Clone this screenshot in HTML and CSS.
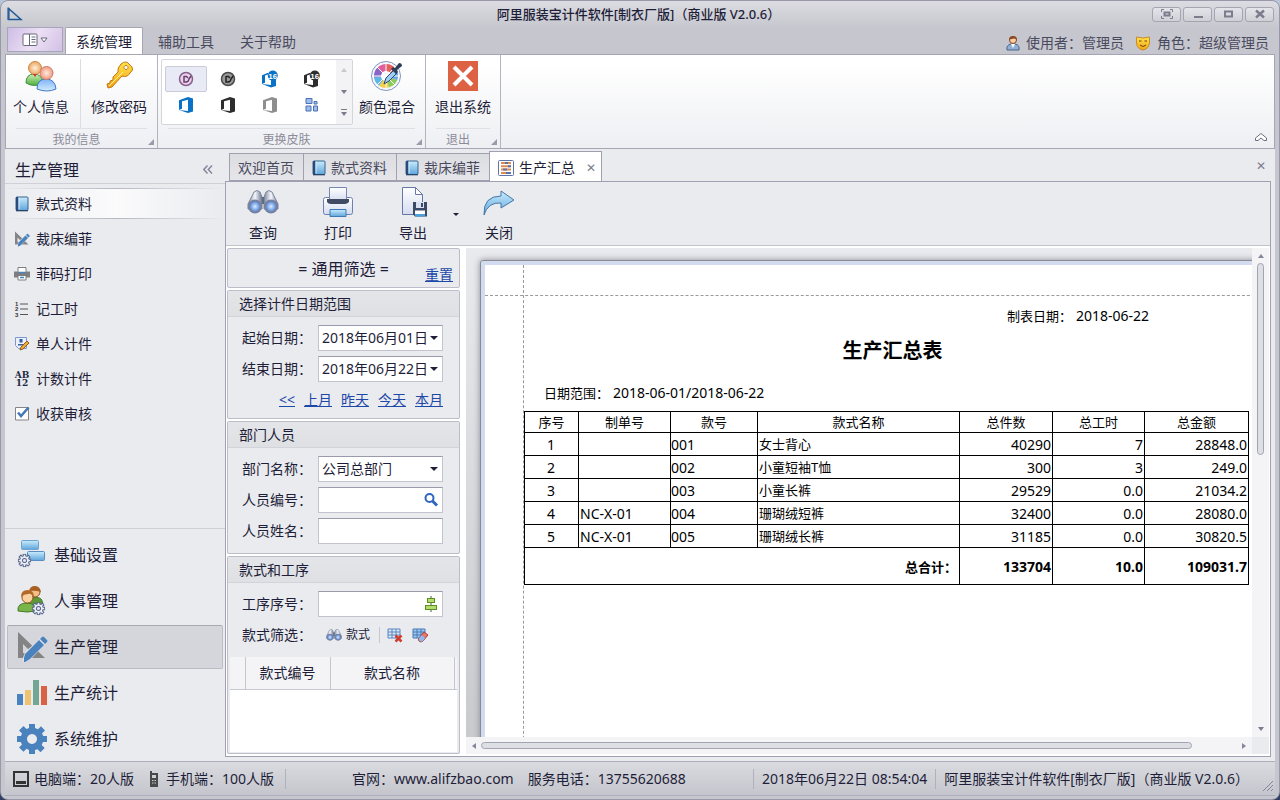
FILE: index.html
```html
<!DOCTYPE html>
<html lang="zh-CN">
<head>
  <meta charset="UTF-8" />
  <title>阿里服装宝计件软件</title>
  <meta name="viewport" content="width=device-width, initial-scale=1.0" />
  <link rel="stylesheet" href="styles.css">
</head>
<body>

  <!-- Shared icons -->
  <svg class="sprite" width="0" height="0" aria-hidden="true">
    <defs>
      <linearGradient id="gBlue" x1="0" y1="0" x2="0" y2="1"><stop offset="0" stop-color="#c9ecfc"/><stop offset="1" stop-color="#5fa5dc"/></linearGradient>
      <linearGradient id="gGreen" x1="0" y1="0" x2="0" y2="1"><stop offset="0" stop-color="#c8efb4"/><stop offset="1" stop-color="#4fae3c"/></linearGradient>
      <linearGradient id="gSky" x1="0" y1="0" x2="0" y2="1"><stop offset="0" stop-color="#7fb2f5"/><stop offset="1" stop-color="#d3ecff"/></linearGradient>
      <linearGradient id="gGold" x1="0" y1="0" x2="0" y2="1"><stop offset="0" stop-color="#ffe34a"/><stop offset="1" stop-color="#f3a313"/></linearGradient>
      <linearGradient id="gSteel" x1="0" y1="0" x2="1" y2="0"><stop offset="0" stop-color="#7d88a0"/><stop offset=".5" stop-color="#f5f7fb"/><stop offset="1" stop-color="#6b7690"/></linearGradient>
      <linearGradient id="gPaper" x1="0" y1="0" x2="0" y2="1"><stop offset="0" stop-color="#ffffff"/><stop offset="1" stop-color="#d5dcf0"/></linearGradient>
      <radialGradient id="gSkin"><stop offset="0" stop-color="#fff0dc"/><stop offset="1" stop-color="#eda65e"/></radialGradient>
      <radialGradient id="gPink"><stop offset="0" stop-color="#ffeadf"/><stop offset="1" stop-color="#ee9a80"/></radialGradient>
      <radialGradient id="gLens"><stop offset="0" stop-color="#d9ecff"/><stop offset="1" stop-color="#4377d0"/></radialGradient>
    </defs>
    <symbol id="book" viewBox="0 0 14 16">
      <rect x="1" y="1" width="12" height="13.5" rx="1" fill="url(#gBlue)" stroke="#35618f"/>
      <path d="M1 1h2.500v13.500H1z" fill="#2b4a7c"/><path d="M4 1.500v12" stroke="#d4efff"/><path d="M1 14.800h12" stroke="#23395c"/>
    </symbol>
    <symbol id="office" viewBox="0 0 16 18">
      <path d="M1 4.200 10 1l5 1.500v13L10 17 1 14l9 1V3.800L4 5.300v7.400L1 14z"/>
    </symbol>
    <symbol id="office16" viewBox="0 0 18 18">
      <path d="M1 5.200 7 2.800V4.600L4 5.400v7.400L1 14z"/><path d="m1 14 9 1v-5h5v6l-5 1.500z"/>
      <circle cx="11.800" cy="5.600" r="5"/>
    </symbol>
    <symbol id="ruler" viewBox="0 0 32 32">
      <path fill="#848484" fill-rule="evenodd" d="M2 1v26h27zM7 13l9 9H7z"/>
      <path fill="#e2e3e8" d="m7 27 2-6L26 6l5 5-16 17-8 3z"/>
      <path fill="#4a82bd" d="m8 27 1-4L23 9l5 5-14 14-5 3H8zM24 8l2-2q1-1 2 0l3 3q1 1 0 2l-2 2z"/>
    </symbol>
    <symbol id="gear" viewBox="0 0 32 32">
      <path fill-rule="evenodd" d="M13 1h6v4l3 1.300 3-3L29 7.500l-3 3 1.300 2.500H31v6h-4l-1.300 3 3 3-4.200 4.200-3-3L19 27v4h-6v-4l-2.500-1.300-3 3L3 24.500l3-3L4.700 19H1v-6h4l1-2.500-3-3L7.500 3l3 3L13 5zM16 11a5 5 0 1 0 .01 0z"/>
    </symbol>
    <symbol id="binoculars" viewBox="0 0 32 28">
      <path d="M13 9h6v7h-6z" fill="#4b5468"/>
      <path d="M7 4q3-3 6 0l2 5v12H1v-5z" fill="url(#gSteel)" stroke="#7a849a"/><path d="M25 4q-3-3-6 0l-2 5v12h14v-5z" fill="url(#gSteel)" stroke="#7a849a"/>
      <circle cx="8" cy="18.500" r="6" fill="url(#gLens)" stroke="#7682a0" stroke-width="2"/><circle cx="24" cy="18.500" r="6" fill="url(#gLens)" stroke="#7682a0" stroke-width="2"/>
    </symbol>
  </svg>

  <div class="app">

    <!-- Title bar -->
    <header class="titlebar">
      <svg class="logo" width="16" height="14" viewBox="0 0 16 14"><path d="M1.500 1.500v11h12.500z" fill="none" stroke="#1f5c96" stroke-width="1.500"/><path d="M1.500 1v12" stroke="#2b5f96" stroke-width="2"/></svg>
      <h1>阿里服装宝计件软件[制衣厂版]（商业版 V2.0.6）</h1>
      <div class="win-buttons">
        <button type="button" aria-label="全屏"><svg width="12" height="10" viewBox="0 0 12 10"><path d="M3 .5H.5V3M9 .5h2.500V3M3 9.500H.5V7M9 9.500h2.500V7" fill="none" stroke="#7b7c8c"/><rect x="3.500" y="3.500" width="5" height="3" fill="none" stroke="#7b7c8c" stroke-width="2"/></svg></button>
        <button type="button" aria-label="最小化"><svg width="12" height="10" viewBox="0 0 12 10"><path d="M2 8h9" stroke="#7b7c8c" stroke-width="2"/></svg></button>
        <button type="button" aria-label="最大化"><svg width="12" height="10" viewBox="0 0 12 10"><rect x="2" y="2.500" width="7" height="5" fill="none" stroke="#7b7c8c" stroke-width="2"/></svg></button>
        <button type="button" aria-label="关闭窗口"><svg width="12" height="10" viewBox="0 0 12 10"><path d="m2 1.500 8 7m0-7-8 7" stroke="#7b7c8c" stroke-width="2.500"/></svg></button>
      </div>
    </header>

    <!-- Ribbon tabs -->
    <nav class="ribbon-tabs">
      <button type="button" class="app-menu" aria-label="菜单">
        <svg width="26" height="14" viewBox="0 0 26 14"><rect x="1" y="1" width="14" height="11.500" rx="1" fill="#fff" stroke="#68687a"/><path d="M7.500 1v11.500M9.500 4h4m-4 2.500h4M9.500 9h4" stroke="#68687a"/><path d="M19 5h6l-3 4z" fill="#fff" stroke="#68687a"/></svg>
      </button>
      <a href="#" class="active">系统管理</a>
      <a href="#">辅助工具</a>
      <a href="#">关于帮助</a>
      <div class="user-info">
        <svg width="14" height="16" viewBox="0 0 14 16"><path d="M1 15q-1-5 4-6h4q5 1 4 6z" fill="#8fb0d4" stroke="#4c658a"/><path d="m5 9 2 4 2-4z" fill="#fff"/><circle cx="7" cy="5" r="3.500" fill="#f6cfa4" stroke="#85431f"/><path d="M3 5q0-4 4-4t4 4Q9 2.500 6 4 4 4 3 5z" fill="#8c4a26"/></svg>
        <span>使用者：管理员</span>
        <svg width="16" height="16" viewBox="0 0 16 16"><path d="M1.500 2q6 2 13 0v6q-1 6-6.500 7Q2 14 1.500 8z" fill="url(#gGold)" stroke="#c98a2c"/><path d="M4 6h2.500M9.500 6H12M5 10q3 3 6 0" fill="none" stroke="#6d4108"/></svg>
        <span>角色：超级管理员</span>
      </div>
    </nav>

    <!-- Ribbon -->
    <section class="ribbon">
      <div class="ribbon-group my-info">
        <div class="ribbon-body">
          <button type="button" class="big-btn">
            <svg width="32" height="32" viewBox="0 0 32 32"><path d="M1 23q0-9 8-9t9 9q-8 5-17 0z" fill="url(#gGreen)" stroke="#3f9140"/><circle cx="10" cy="8" r="6.500" fill="url(#gSkin)" stroke="#c88a4b"/><path d="m8 14 2 3 2-3z" fill="#c33"/><path d="M12 29q0-10 9-10t10 10q-9 4-19 0z" fill="url(#gSky)" stroke="#3e78c8"/><circle cx="21.500" cy="13" r="6.500" fill="url(#gPink)" stroke="#cf7b66"/></svg>
            <span>个人信息</span>
          </button>
          <button type="button" class="big-btn">
            <svg width="32" height="32" viewBox="0 0 32 32"><path d="M18 4q5-4 8 0l3 3q2 3-2 6-3 5-8 3L9 27l-4 1-1-4 3-1v-2l3-1v-3l5-5q-1-4 3-8zm5 1.500a2 2 0 1 0 .01 0z" fill="url(#gGold)" fill-rule="evenodd" stroke="#c27614"/><path d="M6 26 20 12" stroke="#fff3a0"/></svg>
            <span>修改密码</span>
          </button>
        </div>
        <div class="ribbon-caption">我的信息</div>
      </div>

      <div class="ribbon-group skins">
        <div class="ribbon-body">
          <div class="gallery">
            <div class="gallery-items">
              <button type="button" class="selected" aria-label="皮肤 1"><svg width="16" height="16" viewBox="0 0 16 16"><circle cx="8" cy="8" r="6.500" fill="#ecd0ea" stroke="#87618e" stroke-width="1.500"/><path d="M6 5v6h2q2.500 0 3-3l2-3M6 5.500h2.500L10 7" fill="none" stroke="#63406f" stroke-width="1.500"/></svg></button>
              <button type="button" aria-label="皮肤 2"><svg width="16" height="16" viewBox="0 0 16 16"><circle cx="8" cy="8" r="6.500" fill="#999" stroke="#4a4a4a" stroke-width="1.500"/><path d="M6 5v6h2q2.500 0 3-3l2-3M6 5.500h2.500L10 7" fill="none" stroke="#222" stroke-width="1.500"/></svg></button>
              <button type="button" class="c-blue" aria-label="皮肤 3"><svg width="18" height="18" viewBox="0 0 18 18"><use href="#office16"/><text class="badge" x="11.800" y="8.600">16</text></svg></button>
              <button type="button" class="c-dark" aria-label="皮肤 4"><svg width="18" height="18" viewBox="0 0 18 18"><use href="#office16"/><text class="badge" x="11.800" y="8.600">16</text></svg></button>
              <button type="button" class="c-blue" aria-label="皮肤 5"><svg width="16" height="18"><use href="#office"/></svg></button>
              <button type="button" class="c-dark" aria-label="皮肤 6"><svg width="16" height="18"><use href="#office"/></svg></button>
              <button type="button" class="c-grey" aria-label="皮肤 7"><svg width="16" height="18"><use href="#office"/></svg></button>
              <button type="button" aria-label="皮肤 8"><svg width="14" height="16" viewBox="0 0 14 16"><g fill="#9dbdea" stroke="#4c70b4"><path d="M1 1.500h6v5H1zM1 9h5v5H1zM8.500 9h4v5h-4zM9 4.500h3v2.500H9z"/></g></svg></button>
            </div>
            <div class="gallery-scroll"><i class="tri up"></i><i class="tri down"></i><i class="tri more"></i></div>
          </div>
          <button type="button" class="big-btn">
            <svg width="32" height="32" viewBox="0 0 32 32"><circle cx="15" cy="16" r="14.500" fill="#f4f8ff" stroke="#7f95bd"/><g fill="none" stroke-width="7"><path stroke="#e8605a" d="M15 7.500a8.500 8.500 0 0 1 7 3.500"/><path stroke="#6aa4e6" d="M22 11a8.500 8.500 0 0 1 1 8"/><path stroke="#8ccb58" d="M23 19a8.500 8.500 0 0 1-6 5"/><path stroke="#f5cf4c" d="M17 24a8.500 8.500 0 0 1-7-1"/><path stroke="#5cb7e4" d="M10 23a8.500 8.500 0 0 1-3.500-6"/><path stroke="#8a62c8" d="M6.500 17A8.500 8.500 0 0 1 9 10"/><path stroke="#e0609c" d="M9 10a8.500 8.500 0 0 1 6-2.500"/></g><path d="M15 2v28M1 16h28M5 6l20 20M25 6 5 26" stroke="#fff"/><path d="m13 24 2-6 8-8 3 3-8 8z" fill="#9fd0f4" stroke="#2d4870"/><path d="m20 9 2-2 2 1 4-5q3 0 3 3l-5 4 1 2-2 2z" fill="#2f3d58"/></svg>
            <span>颜色混合</span>
          </button>
        </div>
        <div class="ribbon-caption">更换皮肤</div>
      </div>

      <div class="ribbon-group exit">
        <div class="ribbon-body">
          <button type="button" class="big-btn">
            <svg width="32" height="32" viewBox="0 0 32 32"><path d="M1 1h30v30H1z" fill="#dc6243"/><path d="m7 7 18 18M25 7 7 25" stroke="#fff" stroke-width="4"/></svg>
            <span>退出系统</span>
          </button>
        </div>
        <div class="ribbon-caption">退出</div>
      </div>

      <button type="button" class="collapse" aria-label="收起"><svg width="14" height="10" viewBox="0 0 14 10"><path d="m1.500 6 5.500-4.500L12.500 6v2.500H10L7 6 4 8.500H1.500z" fill="#fff" stroke="#6d6e7d"/></svg></button>
    </section>

    <div class="workspace">

      <!-- Sidebar -->
      <aside class="sidebar">
        <div class="side-title">
          <h2>生产管理</h2>
          <button type="button" aria-label="折叠"><svg width="10" height="9" viewBox="0 0 10 9"><path d="M4.500.5.8 4.500l3.700 4M9 .5 5.300 4.500 9 8.500" fill="none" stroke="#85869a" stroke-width="1.500"/></svg></button>
        </div>
        <ul class="side-items">
          <li class="active"><a href="#"><svg width="16" height="16"><use href="#book"/></svg>款式资料</a></li>
          <li><a href="#"><svg width="16" height="16"><use href="#ruler"/></svg>裁床编菲</a></li>
          <li><a href="#"><svg width="16" height="16" viewBox="0 0 16 16"><path d="M0 5.500h16v6H0z" fill="#7e7e7e"/><path d="M4 1.500h8v5H4z" fill="#fff" stroke="#7e7e7e"/><path d="M4 9.500h8v4.500H4z" fill="#fff" stroke="#7e7e7e"/><path d="M4.500 6.500h7M6 11.500h4" stroke="#4a82bd" stroke-width="1.500"/></svg>菲码打印</a></li>
          <li><a href="#"><svg width="16" height="16" viewBox="0 0 16 16"><path d="M6 3h8M6 8h8M6 13.500h8" stroke="#555"/><g font-size="6" font-weight="700" font-family="Liberation Sans" fill="#333"><text x="1" y="5">1</text><text x="1" y="10">2</text><text x="1" y="15.500">3</text></g></svg>记工时</a></li>
          <li><a href="#"><svg width="16" height="16" viewBox="0 0 16 16"><path d="M1.500 1.500h11v11h-8l-3-3z" fill="#e8f1fd" stroke="#7d98cb"/><path d="M5.500 3h3v3.500h-3zM4 8h6v1.500H4z" fill="#3c5d9e"/><path d="m6 14 1-3 6-6 2 2-6 6z" fill="#f1a93b" stroke="#8d5b1e"/></svg>单人计件</a></li>
          <li><a href="#"><svg width="16" height="16" viewBox="0 0 16 16"><g font-size="9" font-weight="700" font-family="DejaVu Serif" fill="#1f2a44" text-anchor="middle"><text x="8" y="7">AB</text><text x="8" y="15">12</text></g></svg>计数计件</a></li>
          <li><a href="#"><svg width="16" height="16" viewBox="0 0 16 16"><path d="M1.500 1.500h13v12.500h-13z" fill="#fff" stroke="#858585"/><path d="m4 6.500 3 3.500 7.500-8.500" fill="none" stroke="#4379b4" stroke-width="2.500"/></svg>收获审核</a></li>
        </ul>
        <ul class="side-groups">
          <li><a href="#"><svg width="32" height="32" viewBox="0 0 32 32"><rect x="5.500" y="1.500" width="17" height="9" rx="1" fill="url(#gBlue)" stroke="#6fa3d0"/><rect x="11.500" y="12.500" width="17" height="9" rx="1" fill="url(#gBlue)" stroke="#5a8cc0"/><svg x="1" y="14" width="15" height="15" viewBox="-2 -2 36 36"><use href="#gear" width="32" height="32" fill="#e8edf7" stroke="#59658a" stroke-width="2.500"/></svg></svg>基础设置</a></li>
          <li><a href="#"><svg width="32" height="32" viewBox="0 0 32 32"><path d="M10 20q0-8 9-8 8 0 8 8z" fill="#5c9a35" stroke="#477b2a"/><circle cx="19" cy="7" r="5" fill="#f3c088" stroke="#8e4d1d"/><path d="M13 6q1-5 6-5t6 6q-6-2-12-1z" fill="#aa6022"/><path d="M2 26q-1-8 9-8 9 0 9 8-9 2-18 0z" fill="#79b54b" stroke="#477b2a"/><circle cx="11.500" cy="12.500" r="5.500" fill="#fad2a0" stroke="#8e4d1d"/><path d="M5 12q0-7 6.500-7t6.500 7q-2-4-6-3-4 0-7 3z" fill="#b56928"/><svg x="15" y="16" width="15" height="15" viewBox="-2 -2 36 36"><use href="#gear" width="32" height="32" fill="#e8edf7" stroke="#59658a" stroke-width="2.500"/></svg></svg>人事管理</a></li>
          <li class="active"><a href="#"><svg width="32" height="32"><use href="#ruler"/></svg>生产管理</a></li>
          <li><a href="#"><svg width="32" height="32" viewBox="0 0 32 32"><path d="M1 17h6v11H1z" fill="#4a82bd"/><path d="M9 13h6v15H9z" fill="#eec26f"/><path d="M17 3h6v25h-6z" fill="#73a794"/><path d="M25 9h6v19h-6z" fill="#da6243"/></svg>生产统计</a></li>
          <li><a href="#"><svg width="32" height="32" fill="#4a82bd"><use href="#gear"/></svg>系统维护</a></li>
        </ul>
      </aside>

      <!-- Document area -->
      <main class="docs">
        <div class="doc-tabs">
          <a href="#">欢迎首页</a>
          <a href="#"><svg width="14" height="16"><use href="#book"/></svg>款式资料</a>
          <a href="#"><svg width="14" height="16"><use href="#book"/></svg>裁床编菲</a>
          <a href="#" class="active"><svg width="16" height="16" viewBox="0 0 16 16"><rect x=".5" y=".5" width="15" height="15" rx="1" fill="#fff" stroke="#5f74a6"/><path d="M3 3h10M3 6.300h10M3 9.600h10M3 13h10" stroke="#e08a50" stroke-width="2"/><path d="M7 3h3M10 6.300h3M5 9.600h4M8 13h5" stroke="#5b76a6" stroke-width="2"/></svg>生产汇总<span class="tab-close">✕</span></a>
          <button type="button" class="close-all" aria-label="关闭标签">✕</button>
        </div>

        <div class="doc-body">
          <div class="toolbar">
            <button type="button"><svg width="32" height="32" viewBox="0 -2 32 32"><use href="#binoculars" width="32" height="28"/></svg>查询</button>
            <button type="button"><svg width="32" height="32" viewBox="0 0 32 32"><rect x="1.500" y="11.500" width="29" height="17" rx="2" fill="url(#gPaper)" stroke="#6e7fae"/><path d="M7.500 1.500h17V15h-17z" fill="url(#gPaper)" stroke="#7787b4"/><path d="M5 13h22v3q-2 2-4 2H9q-3 0-4-2z" fill="#414c64"/><path d="M8 23.500h16v7H8z" fill="url(#gBlue)" stroke="#3f78b2"/></svg>打印</button>
            <button type="button" class="export"><svg width="32" height="32" viewBox="0 0 32 32"><path d="M5.500 1.500h13l7 7v20h-20z" fill="url(#gPaper)" stroke="#6678a8"/><path d="M18.500 1.500v7h7z" fill="#fff" stroke="#6678a8"/><path d="M16 16h14v14.500H18l-2-2z" fill="#3d4a66"/><path d="M19 16h8v6h-8z" fill="#d9e2f2"/><path d="M24 17h2v4h-2z" fill="#3d4a66"/><path d="M18 24.500h10v5H18z" fill="#fff"/><path d="M18 28h10v2.500H18z" fill="#4aa0dc"/></svg>导出</button>
            <i class="tri drop"></i>
            <button type="button"><svg width="32" height="32" viewBox="0 0 32 32"><path d="M1 29Q0 10 18 10V5l13 9-13 8v-5Q5 16 1 29z" fill="url(#gBlue)" stroke="#4577a8"/></svg>关闭</button>
          </div>

          <div class="split">
            <form class="filters">
              <section class="panel filter-head">
                <h3>= 通用筛选 =</h3>
                <a href="#">重置</a>
              </section>

              <fieldset class="panel">
                <legend>选择计件日期范围</legend>
                <div class="fields">
                  <div class="field"><label for="startDate">起始日期：</label><span class="pick"><select id="startDate"><option>2018年06月01日</option></select></span></div>
                  <div class="field"><label for="endDate">结束日期：</label><span class="pick"><select id="endDate"><option>2018年06月22日</option></select></span></div>
                  <div class="quick"><a href="#">&lt;&lt;</a><a href="#">上月</a><a href="#">昨天</a><a href="#">今天</a><a href="#">本月</a></div>
                </div>
              </fieldset>

              <fieldset class="panel">
                <legend>部门人员</legend>
                <div class="fields">
                  <div class="field"><label for="dept">部门名称：</label><span class="pick"><select id="dept"><option>公司总部门</option></select></span></div>
                  <div class="field"><label for="empNo">人员编号：</label><span class="box"><input type="text" id="empNo"><svg width="16" height="16" viewBox="0 0 16 16"><circle cx="6.500" cy="6" r="4" fill="#fff" stroke="#2e66bf" stroke-width="2"/><path d="m9.500 9 4.500 4.500" stroke="#2e66bf" stroke-width="3"/></svg></span></div>
                  <div class="field"><label for="empName">人员姓名：</label><span class="box"><input type="text" id="empName"></span></div>
                </div>
              </fieldset>

              <fieldset class="panel grow">
                <legend>款式和工序</legend>
                <div class="fields">
                  <div class="field"><label for="procNo">工序序号：</label><span class="box"><input type="text" id="procNo"><svg width="16" height="16" viewBox="0 0 16 16"><path d="M8 0v16" stroke="#4d5a3a"/><rect x="4.500" y="2.500" width="7" height="4" fill="#b3dc6a" stroke="#5c8e21"/><rect x="2.500" y="9.500" width="11" height="4" fill="#b3dc6a" stroke="#5c8e21"/></svg></span></div>
                  <div class="field"><span class="label">款式筛选：</span>
                    <span class="mini-tools">
                      <button type="button"><svg width="16" height="14"><use href="#binoculars"/></svg>款式</button>
                      <button type="button" class="sep" aria-label="删除"><svg width="16" height="16" viewBox="0 0 16 16"><path d="M1 2h12v9H1z" fill="#dcebfb" stroke="#5b84bd"/><path d="M1 5h12M1 8h12M5 2v9M9 2v9" stroke="#5b84bd"/><path d="m8.500 8.500 6 6m0-6-6 6" stroke="#cf3d2c" stroke-width="2.500"/></svg></button>
                      <button type="button" aria-label="清空"><svg width="16" height="16" viewBox="0 0 16 16"><path d="M1 2h12v9H1z" fill="#9cc8f0" stroke="#4b78b5"/><path d="M1 5h12M1 8h12M5 2v9M9 2v9" stroke="#4b78b5"/><path d="m7 11 5-6 4 3-5 6q-2 2-4 0-1-1 0-3z" fill="#e8756a" stroke="#a83f38"/><path d="m7 11 3-3 3 3-2 3q-4 2-4-3z" fill="#8fb9ee"/></svg></button>
                    </span>
                  </div>
                </div>
                <div class="style-grid">
                  <table>
                    <colgroup><col class="g-mark"><col class="g-no"><col><col class="g-end"></colgroup>
                    <thead><tr><th></th><th>款式编号</th><th>款式名称</th><th></th></tr></thead>
                  </table>
                </div>
              </fieldset>
            </form>

            <!-- Report preview -->
            <div class="preview">
              <div class="canvas">
                <article class="paper">
                  <p class="made"><span>制表日期：</span>2018-06-22</p>
                  <h2>生产汇总表</h2>
                  <p class="range"><span>日期范围：</span>2018-06-01/2018-06-22</p>
                  <table class="report">
                    <colgroup><col class="c-seq"><col class="c-order"><col class="c-style"><col class="c-name"><col class="c-count"><col class="c-hours"><col class="c-money"></colgroup>
                    <thead>
                      <tr><th>序号</th><th>制单号</th><th>款号</th><th>款式名称</th><th>总件数</th><th>总工时</th><th>总金额</th></tr>
                    </thead>
                    <tbody>
                      <tr><td>1</td><td></td><td>001</td><td>女士背心</td><td>40290</td><td>7</td><td>28848.0</td></tr>
                      <tr><td>2</td><td></td><td>002</td><td>小童短袖T恤</td><td>300</td><td>3</td><td>249.0</td></tr>
                      <tr><td>3</td><td></td><td>003</td><td>小童长裤</td><td>29529</td><td>0.0</td><td>21034.2</td></tr>
                      <tr><td>4</td><td>NC-X-01</td><td>004</td><td>珊瑚绒短裤</td><td>32400</td><td>0.0</td><td>28080.0</td></tr>
                      <tr><td>5</td><td>NC-X-01</td><td>005</td><td>珊瑚绒长裤</td><td>31185</td><td>0.0</td><td>30820.5</td></tr>
                    </tbody>
                    <tfoot>
                      <tr><th colspan="4">总合计：</th><td>133704</td><td>10.0</td><td>109031.7</td></tr>
                    </tfoot>
                  </table>
                </article>
              </div>
              <div class="vbar"><i class="tri up"></i><span class="track"><span class="thumb"></span></span><i class="tri down"></i></div>
              <div class="hbar"><i class="tri left"></i><span class="track"><span class="thumb"></span></span><i class="tri right"></i></div>
              <div class="corner"></div>
            </div>
          </div>
        </div>
      </main>
    </div>

    <!-- Status bar -->
    <footer class="statusbar">
      <svg width="16" height="16" viewBox="0 0 16 16"><path d="M1 1h14v14H1z" fill="none" stroke="#333" stroke-width="2"/><path d="M3 10h10v3H3z" fill="#333"/></svg>
      <span>电脑端：20人版</span>
      <svg class="phone" width="10" height="16" viewBox="0 0 10 16"><path d="M1 0h2v2h6v14H1z" fill="#4a4a4a"/><path d="M3 4h4v3H3z" fill="#d0d0d4"/><path d="M3 9.500h4M3 12h4" stroke="#d0d0d4" stroke-dasharray="1 .5"/></svg>
      <span>手机端：100人版</span>
      <div class="status-mid"><span>官网：www.alifzbao.com</span><span>服务电话：13755620688</span></div>
      <span class="divided">2018年06月22日 08:54:04</span>
      <span class="divided version">阿里服装宝计件软件[制衣厂版]（商业版 V2.0.6）</span>
      <svg class="grip" width="12" height="12" viewBox="0 0 12 12"><path d="M1 11 11 1M5 11l6-6M9 11l2-2" stroke="#85869a"/></svg>
    </footer>
  </div>

</body>
</html>
```
FILE: styles.css
```css
* {
  box-sizing: border-box;
}

body {
  margin: 0;
  background: linear-gradient(#b9c6d8, #2f3f60);
  color: #1e1e38;
  font-family: "Noto Sans", "Noto Sans CJK SC", sans-serif;
  font-size: 14px;
  line-height: 20px;
}

h1, h2, h3, p, ul, fieldset {
  margin: 0;
  padding: 0;
  font-weight: normal;
}

ul {
  list-style: none;
}

fieldset {
  border: 0;
  min-width: 0;
}

a {
  color: inherit;
  text-decoration: none;
}

button, input, select {
  margin: 0;
  padding: 0;
  border: 0;
  background: none;
  color: inherit;
  font: inherit;
}

svg {
  display: block;
  flex: none;
}

.sprite {
  position: absolute;
}

.app {
  display: flex;
  flex-direction: column;
  height: 100vh;
  padding: 0 4px 3px;
  border: 1px solid #9898aa;
  border-radius: 8px;
  background: linear-gradient(#dcdce2, #c6c6ce 27px);
  overflow: hidden;
}

/* Title bar */
.titlebar {
  display: flex;
  align-items: center;
  height: 26px;
  padding: 0 1px 0 2px;
}

.titlebar h1 {
  flex: 1;
  padding-left: 102px;
  text-align: center;
  font-size: 13px;
  font-weight: 500;
}

.win-buttons {
  display: flex;
  gap: 2px;
}

.win-buttons button {
  display: flex;
  align-items: center;
  justify-content: center;
  width: 29px;
  height: 15px;
  border: 1px solid #a5a5b2;
  border-radius: 3px;
  background: linear-gradient(#e4e4ea, #cfcfd6);
}

/* Ribbon tabs */
.ribbon-tabs {
  display: flex;
  height: 27px;
  padding-left: 2px;
  color: #4a4a5e;
}

.app-menu {
  display: flex;
  align-items: center;
  justify-content: center;
  width: 56px;
  height: 25px;
  margin-right: 2px;
  border: 1px solid #a9a4bd;
  background: linear-gradient(120deg, #cdbce4, #ece0f4 50%, #d3c0e6);
}

.ribbon-tabs a {
  padding: 5px 13px 0;
}

.ribbon-tabs .active {
  padding: 4px 10px 0;
  margin-right: 2px;
  border: 1px solid #a5a5b4;
  border-bottom: 0;
  border-radius: 2px 2px 0 0;
  background: #fff;
  color: #1e1e38;
}

.user-info {
  display: flex;
  align-items: center;
  gap: 6px;
  margin-left: auto;
  padding: 5px 6px 0 0;
}

.user-info span + svg {
  margin-left: 5px;
}

/* Ribbon */
.ribbon {
  display: flex;
  height: 95px;
  border: 1px solid #a5a5b4;
  background: linear-gradient(#fff 10px, #eeeff3);
}

.ribbon-group {
  position: relative;
  display: flex;
  flex-direction: column;
  border-right: 1px solid #b4b4c0;
}

.ribbon-body {
  display: flex;
  flex: 1;
  padding-top: 4px;
}

.ribbon-caption {
  height: 20px;
  margin: 0 10px;
  padding-right: 10px;
  border-top: 1px solid #dfdfe5;
  color: #8c8c99;
  font-size: 12px;
  line-height: 22px;
  text-align: center;
}

.ribbon-group::after {
  content: "";
  position: absolute;
  right: 3px;
  bottom: 3px;
  border: 3px solid transparent;
  border-right-color: #9a9aa8;
  border-bottom-color: #9a9aa8;
}

.big-btn {
  display: flex;
  flex-direction: column;
  align-items: center;
  gap: 5px;
  padding: 1px 9px 0 7px;
  white-space: nowrap;
}

.my-info .big-btn + .big-btn {
  padding: 1px 10px 0;
  margin-left: 2px;
  border-left: 1px solid #dcdce4;
}

.gallery {
  display: flex;
  width: 192px;
  height: 66px;
  margin-left: 3px;
  border: 1px solid #d5d5dd;
  border-radius: 2px;
  background: #fff;
}

.skins .big-btn {
  padding: 1px 10px 0 6px;
}

.gallery-items {
  display: grid;
  grid-template-columns: repeat(4, 42px);
  grid-auto-rows: 26px;
  align-content: center;
  padding: 0 3px;
}

.gallery-items button {
  display: flex;
  align-items: center;
  justify-content: center;
}

.gallery-items .selected {
  border: 1px solid #c9cbd8;
  border-radius: 2px;
  background: #e8ebf5;
}

.c-blue { fill: #0a72c6; }
.c-dark { fill: #2d2d2d; }
.c-grey { fill: #8e8e8e; }

.badge {
  fill: #fff;
  font: 700 8px "Liberation Sans", sans-serif;
  text-anchor: middle;
}

.gallery-scroll {
  display: flex;
  flex: 1;
  flex-direction: column;
  align-items: center;
  justify-content: space-between;
  padding: 8px 0;
  background: #f3f3f6;
}

.tri {
  flex: none;
  border: 3px solid transparent;
}

.tri.up { border-top: 0; border-bottom: 4px solid #85869a; }
.tri.down, .tri.more { border-bottom: 0; border-top: 4px solid #7a7b8b; }
.tri.left { border-left: 0; border-right: 4px solid #85869a; }
.tri.right { border-right: 0; border-left: 4px solid #85869a; }
.gallery-scroll .up { border-bottom-color: #c8c8d0; }

.tri.more {
  position: relative;
}

.tri.more::before {
  content: "";
  position: absolute;
  top: -7px;
  left: -3px;
  width: 6px;
  height: 1px;
  background: #7a7b8b;
}

.exit .big-btn {
  padding: 1px 9px 0;
}

.collapse {
  align-self: flex-end;
  margin: 0 6px 6px auto;
}

/* Workspace */
.workspace {
  display: flex;
  flex: 1;
  min-height: 0;
  padding: 1px 4px 0 0;
  background: #eaebef;
}

.sidebar {
  display: flex;
  flex-direction: column;
  width: 220px;
}

.side-title {
  display: flex;
  align-items: center;
  justify-content: space-between;
  height: 34px;
  padding: 6px 12px 0 10px;
  border-bottom: 1px solid #d0d0d6;
}

.side-title h2 {
  font-size: 16px;
}

.side-items {
  flex: 1;
  padding-top: 4px;
}

.side-items a {
  display: flex;
  align-items: center;
  gap: 6px;
  height: 31px;
  margin-bottom: 4px;
  padding-left: 9px;
}

.side-items .active a {
  border: solid transparent;
  border-width: 1px 0;
  border-image: linear-gradient(90deg, #eaebef, #b6b7c2 50%, #eaebef) 1;
  background: linear-gradient(90deg, #eaebef, #fbfbfc 50%, #eaebef);
}

.side-groups {
  padding: 4px 2px 0;
  border-top: 1px solid #d0d0d6;
}

.side-groups a {
  display: flex;
  align-items: center;
  gap: 6px;
  height: 44px;
  margin-bottom: 2px;
  padding-left: 8px;
  border: 1px solid transparent;
  border-radius: 2px;
  font-size: 16px;
}

.side-groups li:last-child a {
  margin-bottom: 0;
}

.side-groups .active a {
  border-color: #a8a8b4 #bcbcc6 #bcbcc6;
  background: #d5d6db;
}

/* Document tabs */
.docs {
  display: flex;
  flex: 1;
  flex-direction: column;
  min-width: 0;
  padding-bottom: 4px;
}

.doc-tabs {
  display: flex;
  align-items: flex-end;
  height: 31px;
  padding-left: 4px;
}

.doc-tabs a {
  display: flex;
  align-items: center;
  gap: 5px;
  height: 28px;
  padding: 2px 9px 0 8px;
  border: 1px solid #a0a0b0;
  border-right: 0;
  background: linear-gradient(#dcdde1, #e6e6ea);
  color: #4a4a5e;
}

.doc-tabs .active {
  height: 30px;
  padding-right: 5px;
  border-right: 1px solid #a0a0b0;
  border-bottom: 0;
  background: #fff;
  color: #1e1e38;
}

.tab-close, .close-all {
  color: #7c7d8e;
  font-family: "DejaVu Sans", sans-serif;
  font-size: 12px;
  font-weight: bold;
}

.tab-close {
  margin-left: 6px;
}

.close-all {
  align-self: center;
  margin-left: auto;
  padding-right: 5px;
}

.doc-body {
  display: flex;
  flex: 1;
  flex-direction: column;
  min-height: 0;
  padding: 0 1px 2px;
  border: 1px solid #a0a0b0;
  background: #fff;
}

.toolbar {
  display: flex;
  align-items: flex-start;
  height: 64px;
  margin: 0 -1px;
  padding: 4px 12px 0;
  border-bottom: 1px solid #c3c3cc;
  background: #eaebef;
}

.toolbar button {
  display: flex;
  flex-direction: column;
  align-items: center;
  gap: 5px;
  width: 50px;
  margin-right: 25px;
}

.toolbar .export {
  margin-right: 15px;
}

.toolbar .drop {
  margin: 27px 15px 0 0;
  border-bottom: 0;
  border-top: 3px solid #1e1e38;
}

.split {
  display: flex;
  flex: 1;
  gap: 6px;
  min-height: 0;
  padding-top: 2px;
}

/* Filters */
.filters {
  display: flex;
  flex-direction: column;
  gap: 2px;
  width: 233px;
}

.panel {
  border: 1px solid #bcbdc8;
  border-radius: 2px;
  background: #eaebef;
}

.filter-head {
  display: flex;
  height: 40px;
  padding: 10px 6px 0;
}

.filter-head h3 {
  flex: 1;
  padding-left: 28px;
  text-align: center;
  font-size: 16px;
}

.filter-head a {
  align-self: flex-end;
  padding-bottom: 2px;
}

.filter-head a, .quick a {
  color: #1c48a8;
  text-decoration: underline;
}

.panel legend {
  float: left;
  width: 100%;
  height: 26px;
  padding: 3px 11px;
  border-bottom: 1px solid #d3d4da;
  background: linear-gradient(#e4e5e9, #dfe0e4);
}

.fields {
  display: flex;
  flex-direction: column;
  clear: both;
  gap: 5px;
  padding: 8px 16px 9px 14px;
}

.field {
  display: flex;
  align-items: center;
  height: 26px;
}

.field label, .field .label {
  flex: none;
  width: 76px;
}

.pick, .box {
  position: relative;
  display: flex;
  flex: 1;
  align-items: center;
  min-width: 0;
  height: 26px;
  border: 1px solid #c2c3cd;
  border-top-color: #9a9aaa;
  background: #fff;
}

.pick::after {
  content: "";
  position: absolute;
  right: 4px;
  top: 10px;
  border: 4px solid transparent;
  border-top-color: #1e1e38;
  border-bottom: 0;
  pointer-events: none;
}

.pick select {
  width: 100%;
  height: 24px;
  padding-left: 3px;
  appearance: none;
}

.box input {
  flex: 1;
  width: 100%;
  min-width: 0;
  height: 24px;
  padding: 0 3px;
}

.box svg {
  margin-right: 3px;
}

.quick {
  display: flex;
  justify-content: flex-end;
  gap: 9px;
  padding-top: 4px;
  line-height: 18px;
}

.grow {
  display: flex;
  flex: 1;
  flex-direction: column;
  min-height: 0;
}

.mini-tools, .mini-tools button {
  display: flex;
  align-items: center;
}

.mini-tools {
  gap: 9px;
  padding-left: 8px;
  font-size: 12px;
}

.mini-tools button {
  gap: 4px;
}

.mini-tools .sep {
  padding-left: 7px;
  border-left: 1px solid #c6c7d0;
}

.style-grid {
  flex: 1;
  margin: 0 2px 1px;
  background: #fff;
}

.style-grid table {
  width: 100%;
  border-collapse: collapse;
  table-layout: fixed;
}

.style-grid th {
  height: 32px;
  padding: 0;
  border-right: 1px solid #c6c7d0;
  border-bottom: 1px solid #c6c7d0;
  background: #f4f4f7;
  font-weight: normal;
}

.style-grid th:last-child {
  border-right: 0;
}

.g-mark { width: 15px; }
.g-no { width: 85px; }
.g-end { width: 3px; }

/* Report preview */
.preview {
  display: grid;
  flex: 1;
  grid-template-columns: minmax(0, 1fr) 17px;
  grid-template-rows: minmax(0, 1fr) 17px;
  min-width: 0;
}

.canvas {
  padding: 12px 0 0 14px;
  background: linear-gradient(#e9eaee, #c9cace);
  overflow: hidden;
}

.paper {
  position: relative;
  width: 820px;
  height: 1100px;
  padding: 41px 0 0 39px;
  border: 1px solid #8a8b94;
  border-radius: 3px 0 0;
  box-shadow: inset 0 0 0 4px #d3dbf1, 0 0 6px #8a8b94;
  background: #fff;
  color: #000;
}

/* dashed page margins */
.paper::before, .paper::after {
  content: "";
  position: absolute;
}

.paper::before {
  top: 34px;
  left: 4px;
  right: 4px;
  border-top: 1px dashed #9a9a9a;
}

.paper::after {
  top: 4px;
  bottom: 4px;
  left: 42px;
  border-left: 1px dashed #9a9a9a;
}

.paper p {
  display: flex;
  height: 28px;
  align-items: center;
}

.paper p span {
  width: 69px;
  font-size: 13px;
}

.paper .made {
  width: 725px;
  justify-content: flex-end;
  padding-right: 96px;
}

.paper h2 {
  width: 725px;
  padding: 9px 0 16px 20px;
  font-size: 20px;
  font-weight: bold;
  line-height: 24px;
  text-align: center;
}

.paper .range {
  padding-left: 24px;
  margin-bottom: 4px;
}

.report {
  width: 725px;
  margin-left: 4px;
  border-collapse: collapse;
  table-layout: fixed;
}

.report th, .report td {
  height: 23px;
  padding: 1px 1px 0 0;
  border: 1px solid #000;
  line-height: 20px;
  text-align: right;
}

.report thead th {
  height: 21px;
  padding: 0;
  font-size: 13px;
  font-weight: normal;
  text-align: center;
}

.report tbody td:nth-child(1) {
  text-align: center;
}

.report tbody td:nth-child(2),
.report tbody td:nth-child(3),
.report tbody td:nth-child(4) {
  text-align: left;
}

.report tbody td:nth-child(2) {
  padding-left: 1px;
}

.report tbody td:nth-child(4) {
  padding: 0 1px;
  font-size: 13px;
}

.report tfoot th, .report tfoot td {
  height: 37px;
  font-weight: bold;
}

.report tfoot th {
  padding-right: 2px;
  font-size: 13px;
}

.c-seq { width: 54px; }
.c-order { width: 92px; }
.c-style { width: 87px; }
.c-name { width: 202px; }
.c-count { width: 93px; }
.c-hours { width: 92px; }

.vbar, .hbar {
  display: flex;
  align-items: center;
  gap: 5px;
  background: #f4f4f7;
}

.vbar {
  flex-direction: column;
  padding: 6px 0;
}

.hbar {
  padding: 0 6px;
}

.track {
  flex: 1;
}

.thumb {
  display: block;
  border: 1px solid #a3a4b2;
  border-radius: 4px;
  background: #dedfe5;
}

.vbar .thumb {
  width: 7px;
  height: 192px;
}

.hbar .thumb {
  width: 94%;
  height: 7px;
}

.corner {
  background: #eaebef;
}

/* Status bar */
.statusbar {
  display: flex;
  align-items: center;
  gap: 5px;
  height: 35px;
  padding: 0 0 0 8px;
  border: solid #adaebb;
  border-width: 1px 0;
  background: linear-gradient(#dadbe0, #c5c6cd);
  white-space: nowrap;
}

.statusbar .phone {
  margin: 0 2px 0 10px;
}

.status-mid {
  display: flex;
  flex: 1;
  gap: 14px;
  margin-left: 6px;
  padding-left: 66px;
  border-left: 1px solid #b0b1bc;
}

.divided {
  padding: 0 3px 0 8px;
  border-left: 1px solid #b0b1bc;
}

.version {
  padding-right: 8px;
}

.grip {
  align-self: flex-end;
  margin: 0 1px 3px 0;
}
```
